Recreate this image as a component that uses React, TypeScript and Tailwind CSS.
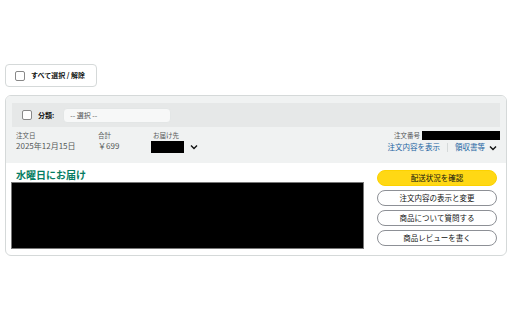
import React from "react";

const Chevron = () => (
  <svg width="8" height="6" viewBox="0 0 8 6" className="inline-block">
    <path d="M1 1.5 L4 4.5 L7 1.5" fill="none" stroke="#111" strokeWidth="1.4" />
  </svg>
);

export default function App() {
  return (
    <div
      className="w-[512px] h-[320px] bg-white text-[#0f1111] px-[5px] pt-[64px]"
      style={{ fontFamily: '"Noto Sans CJK JP", "Noto Sans", sans-serif' }}
    >
      <div className="flex items-center h-[23px] w-[92px] border border-[#d5d9d9] rounded-[4px] pl-[9px] gap-[6px]">
        <span className="w-[10px] h-[10px] border border-[#888] rounded-[2px] bg-white" />
        <span className="text-[7px] font-bold leading-none">すべて選択 / 解除</span>
      </div>

      <div className="mt-[8px] w-[502px] h-[161px] border border-[#d5d9d9] rounded-[6px] overflow-hidden flex flex-col">
        <div className="bg-[#f0f2f2] px-[6px] pt-[7px] pb-[10px]">
          <div className="h-[24px] bg-[#e6e8e8] flex items-center pl-[10px] gap-[6px]">
            <span className="w-[10px] h-[10px] border border-[#888] rounded-[2px] bg-white" />
            <span className="text-[7px] font-bold leading-none">分類:</span>
            <div className="ml-[3px] w-[108px] h-[15px] bg-[#f7f8f8] border border-[#e3e6e6] rounded-[4px] flex items-center pl-[6px] text-[7px] text-[#555] leading-none">
              -- 選択 --
            </div>
          </div>
          <div className="flex justify-between mt-[4px] pl-[4px]">
            <div className="flex">
              <div className="w-[82px]">
                <div className="text-[6.5px] leading-[9px] text-[#565959]">注文日</div>
                <div className="text-[8px] leading-[12px] text-[#565959]">2025年12月15日</div>
              </div>
              <div className="w-[55px]">
                <div className="text-[6.5px] leading-[9px] text-[#565959]">合計</div>
                <div className="text-[8px] leading-[12px] text-[#565959]">￥699</div>
              </div>
              <div>
                <div className="text-[6.5px] leading-[9px] text-[#565959]">お届け先</div>
                <div className="flex items-center gap-[6px] -ml-[2px] mt-[1px]">
                  <span className="w-[33px] h-[12px] bg-black" />
                  <Chevron />
                </div>
              </div>
            </div>
            <div className="flex flex-col items-end">
              <div className="flex items-center gap-[2px]">
                <span className="text-[6.5px] leading-[9px] text-[#565959]">注文番号</span>
                <span className="w-[78px] h-[9px] bg-black" />
              </div>
              <div className="flex items-center text-[7.5px] leading-[12px] text-[#2162a1] mt-[1px] pr-[3px]">
                <span>注文内容を表示</span>
                <span className="mx-[7px] w-px h-[9px] bg-[#d5d9d9]" />
                <span>領収書等</span>
                <span className="ml-[4px]"><Chevron /></span>
              </div>
            </div>
          </div>
        </div>
        <div className="flex-1 flex px-[5px] pt-[5px]">
          <div className="w-[353px]">
            <div className="text-[10px] font-bold text-[#067d62] leading-[13px] pl-[5px]">水曜日にお届け</div>
            <div className="mt-[1px] h-[67px] bg-black border border-[#777]" />
          </div>
          <div className="ml-[13px] w-[120px] flex flex-col gap-[4px] pt-[2px]">
            <div className="h-[16px] rounded-full bg-[#ffd814] border border-[#fcd200] flex items-center justify-center text-[7.5px] leading-none">配送状況を確認</div>
            <div className="h-[16px] rounded-full bg-white border border-[#8d9096] flex items-center justify-center text-[7.5px] leading-none">注文内容の表示と変更</div>
            <div className="h-[16px] rounded-full bg-white border border-[#8d9096] flex items-center justify-center text-[7.5px] leading-none">商品について質問する</div>
            <div className="h-[16px] rounded-full bg-white border border-[#8d9096] flex items-center justify-center text-[7.5px] leading-none">商品レビューを書く</div>
          </div>
        </div>
      </div>
    </div>
  );
}
